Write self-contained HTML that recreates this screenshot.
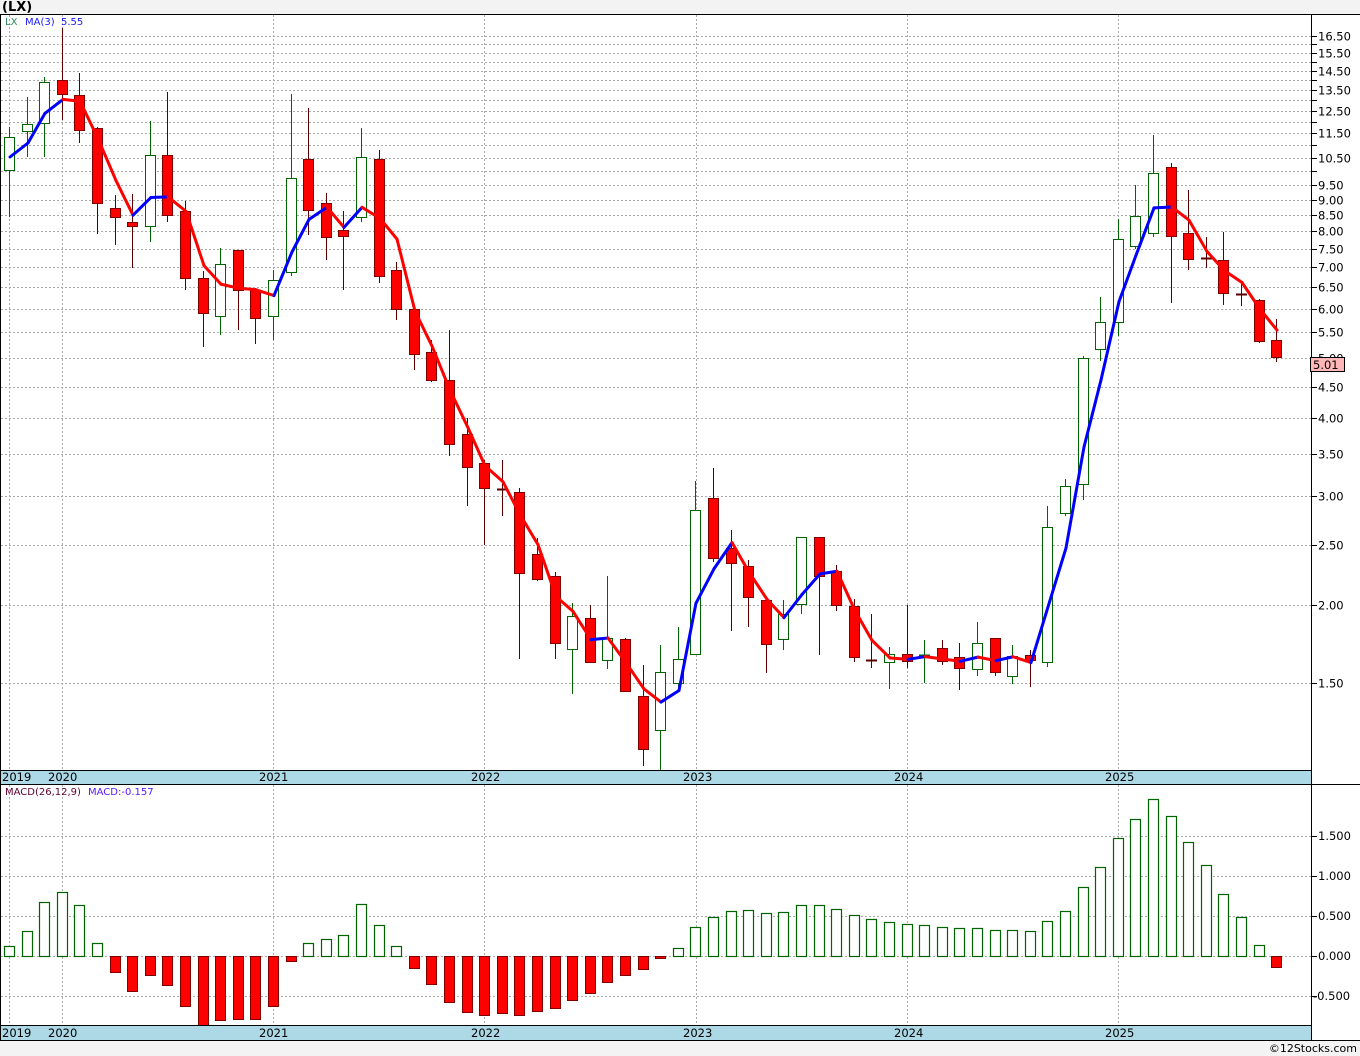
<!DOCTYPE html>
<html><head><meta charset="utf-8"><style>
html,body{margin:0;padding:0;background:#f3f3f3;}
svg{display:block;font-family:"DejaVu Sans","Liberation Sans",sans-serif;}
</style></head><body>
<svg id="s" width="1360" height="1056" xmlns="http://www.w3.org/2000/svg">
<rect x="0" y="0" width="1360" height="1056" fill="#f3f3f3"/>
<rect x="1" y="14" width="1310" height="756" fill="#fff"/>
<rect x="1" y="784" width="1310" height="241" fill="#fff"/>
<rect x="1311" y="14" width="49" height="1026" fill="#fff"/>
<g id="grid"></g>
<g id="mac"></g>
<g id="cand"></g>
<g id="ma"></g>
<rect x="1" y="770" width="1310" height="14" fill="#add8e6"/>
<rect x="1" y="1025" width="1310" height="15" fill="#add8e6"/>
<g stroke="#000" stroke-width="1" fill="none">
<line x1="0" y1="14.5" x2="1360" y2="14.5"/>
<line x1="1" y1="770.5" x2="1311" y2="770.5"/>
<line x1="1" y1="784.5" x2="1360" y2="784.5"/>
<line x1="1" y1="1025.5" x2="1311" y2="1025.5"/>
<line x1="0" y1="1040.5" x2="1360" y2="1040.5"/>
<line x1="1311.5" y1="14" x2="1311.5" y2="1040"/>
<line x1="0.5" y1="14" x2="0.5" y2="1040"/>
</g>
<g id="axis"></g>
<text x="2" y="11" font-size="13" font-weight="bold" fill="#000">(LX)</text>
<text x="5" y="25" font-size="10" fill="#2e8b57">LX</text>
<text x="25" y="25" font-size="10" fill="#1a1aff">MA(3)</text>
<text x="61" y="25" font-size="10" fill="#1a1aff">5.55</text>
<text x="5" y="795" font-size="10" fill="#600030">MACD(26,12,9)</text>
<text x="88" y="795" font-size="10" fill="#5a1aff">MACD:-0.157</text>
<rect x="1310.5" y="357.5" width="34" height="14" fill="#ffb6b6" stroke="#000"/>
<text x="1313" y="369" font-size="11.5" fill="#000">5.01</text>
<text x="1357" y="1052" font-size="11" fill="#000" text-anchor="end">©12Stocks.com</text>
</svg>
<script>
var NS="http://www.w3.org/2000/svg";
function el(p,t,a,txt){var e=document.createElementNS(NS,t);for(var k in a)e.setAttribute(k,a[k]);if(txt!=null)e.textContent=txt;document.getElementById(p).appendChild(e);return e;}
function py(p){return 36+269.8*Math.log(16.5/p);}
for(var p=1.5;p<=16.51;p+=0.5){var y=Math.round(py(p))+0.5;el('grid','line',{x1:1,x2:1311,y1:y,y2:y,stroke:'#aaa','stroke-dasharray':'2,2'});
 el('axis','line',{x1:1311,x2:1317,y1:y,y2:y,stroke:'#000'});
 var show=(p<=9.51)||(Math.abs(p*2%2-1)<0.01);
 if(show)el('axis','text',{x:1318,y:y+4,'font-size':11.5,fill:'#000'},p.toFixed(2));}
var years=[62,273,484,696,907,1118];
years.concat([9]).forEach(function(x){el('grid','line',{x1:x+.5,x2:x+.5,y1:15,y2:770,stroke:'#aaa','stroke-dasharray':'2,2'});el('grid','line',{x1:x+.5,x2:x+.5,y1:785,y2:1025,stroke:'#aaa','stroke-dasharray':'2,2'});});
[[2,'2019'],[48,'2020'],[259,'2021'],[471,'2022'],[683,'2023'],[894,'2024'],[1105,'2025']].forEach(function(a){
 el('axis','text',{x:a[0],y:781,'font-size':11.5,fill:'#000'},a[1]);el('axis','text',{x:a[0],y:1037,'font-size':11.5,fill:'#000'},a[1]);});
[[836,'1.500'],[876,'1.000'],[916,'0.500'],[956,'0.000'],[996,'-0.500']].forEach(function(a){
 el('grid','line',{x1:1,x2:1311,y1:a[0]+.5,y2:a[0]+.5,stroke:'#aaa','stroke-dasharray':'2,2'});
 el('axis','line',{x1:1311,x2:1317,y1:a[0]+.5,y2:a[0]+.5,stroke:'#000'});
 el('axis','text',{x:a[1][0]=='-'?1313:1318,y:a[0]+4,'font-size':11.5,fill:'#000'},a[1]);});
var C=[['g',137,170,127,217],['g',124,131,97,157],['g',82,123,77,157],['r',80,94,28,120],['r',95,130,73,143],['r',128,203,127,234],['r',208,217,195,245],['r',222,226,194,268],['g',155,226,121,242],['r',155,215,92,222],
['r',211,278,201,290],['r',278,313,271,347],['g',264,316,248,335],['r',250,290,250,330],['r',290,318,288,344],['g',280,316,270,340],['g',178,272,94,276],['r',159,210,108,235],['r',203,237,193,260],['r',230,236,211,290],
['g',157,217,128,222],['r',159,276,150,283],['r',270,309,262,320],['r',309,354,306,370],['r',352,380,340,382],['r',380,444,330,456],['r',434,467,418,506],['r',463,488,460,545],['r',489,491,460,516],['r',492,573,488,659],
['r',554,579,538,581],['r',576,643,572,659],['g',616,649,603,694],['r',618,662,605,663],['g',638,660,576,669],['r',639,691,638,692],['r',696,749,665,766],['g',672,730,645,770],['g',659,683,627,690],['g',510,654,481,654],
['r',498,558,468,562],['r',548,563,530,631],['r',566,597,560,627],['r',600,644,598,673],['g',614,639,600,650],['g',537,604,537,614],['r',537,576,537,655],['r',571,605,565,611],['r',606,657,599,662],['r',660,663,614,668],
['g',654,662,647,689],['r',654,661,605,668],['g',655,658,640,683],['r',648,661,640,665],['r',657,668,643,690],['g',643,669,622,676],['r',638,672,638,676],['g',656,676,645,684],['r',655,660,650,687],['g',527,662,506,667],
['g',486,513,479,516],['g',358,484,356,500],['g',322,349,297,361],['g',239,322,219,336],['g',216,246,185,249],['g',173,233,135,237],['r',167,236,163,303],['r',233,259,190,270],['r',258,260,237,268],['r',260,293,232,305],
['r',294,296,281,306],['r',300,341,299,343],['r',340,357,319,362]];
var xs=[];
C.forEach(function(c,i){var x=Math.round(9+17.6*i);xs.push(x);var g=c[0]=='g';var col=g?'#006400':'#5a0000';
 el('cand','line',{x1:x+.5,x2:x+.5,y1:c[3],y2:c[4],stroke:col});
 if(c[2]-c[1]<=3){el('cand','line',{x1:x-5,x2:x+6,y1:c[1]+.5,y2:c[1]+.5,stroke:col,'stroke-width':2});}
 else el('cand','rect',{x:x-4.5,y:c[1]+.5,width:10,height:c[2]-c[1],fill:g?'#fff':'#ff0000',stroke:g?'#006400':'#800000'});});
var cl=C.map(function(c){var y=c[0]=='g'?c[1]:c[2];return 16.5*Math.exp(-(y-36)/269.8);});
var my=[157,143];
for(var i=2;i<C.length;i++){my.push(py((cl[i]+cl[i-1]+cl[i-2])/3));}
for(var i=1;i<my.length;i++){el('ma','line',{x1:xs[i-1]+1,y1:my[i-1],x2:xs[i]+1,y2:my[i],stroke:my[i]<my[i-1]?'#0000ff':'#ff0000','stroke-width':3,'stroke-linecap':'round'});}
var M=[946,931,902,892,905,943,972,991,975,985,1006,1025,1020,1019,1019,1006,961,943,939,935,904,925,946,968,984,1002,1012,1015,1013,1015,1011,1008,1000,993,982,975,969,958,948,927,917,911,910,913,912,905,905,909,915,919,922,924,925,927,928,928,930,930,931,921,911,887,867,838,819,799,816,842,865,894,917,945,967];
M.forEach(function(v,i){var x=xs[i];if(v<956)el('mac','rect',{x:x-4.5,y:v+.5,width:10,height:956-v,fill:'#fff',stroke:'#006400','stroke-width':1.2});
 else el('mac','rect',{x:x-4.5,y:956.5,width:10,height:v-956,fill:'#ff0000',stroke:'#800000'});});
</script>
</body></html>
